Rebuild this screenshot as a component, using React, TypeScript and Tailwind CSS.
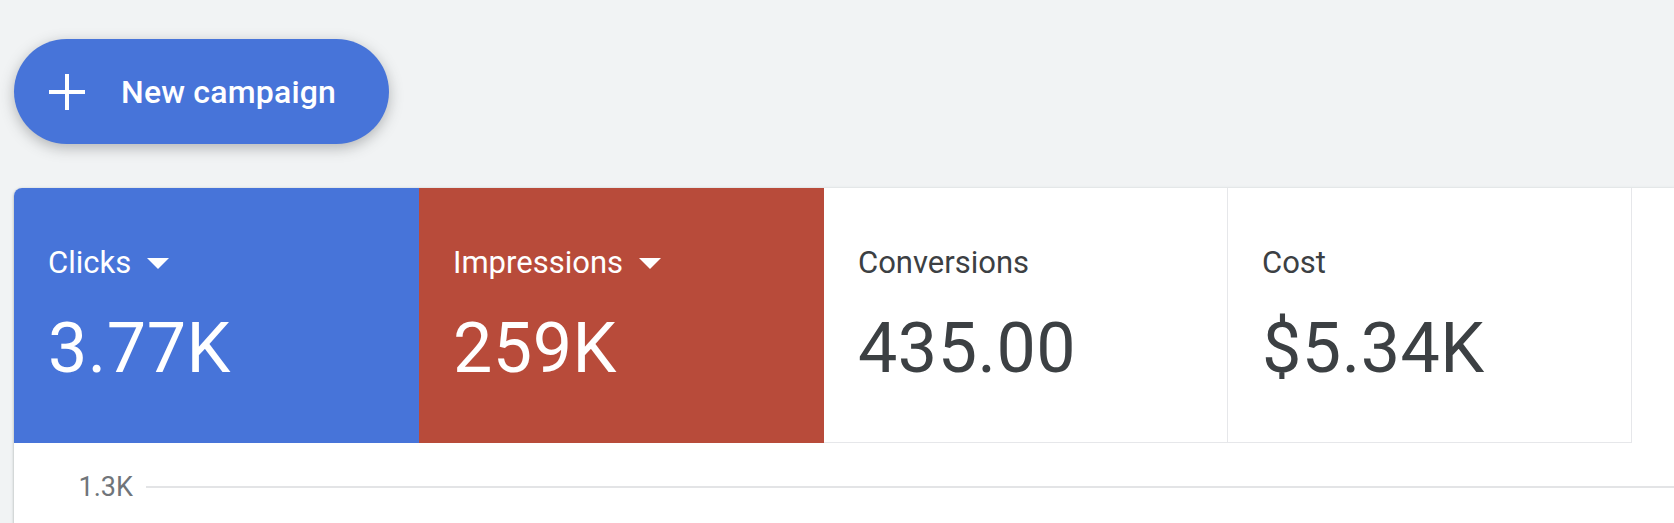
import React from 'react';

type Metric = {
  label: string;
  value: string;
  tone: 'blue' | 'red' | 'plain';
  dropdown?: boolean;
};

const metrics: Metric[] = [
  { label: 'Clicks', value: '3.77K', tone: 'blue', dropdown: true },
  { label: 'Impressions', value: '259K', tone: 'red', dropdown: true },
  { label: 'Conversions', value: '435.00', tone: 'plain' },
  { label: 'Cost', value: '$5.34K', tone: 'plain' },
];

const toneClass: Record<Metric['tone'], string> = {
  blue: 'w-[405px] bg-[#4774d9] text-white',
  red: 'w-[405px] bg-[#b84b3a] text-white',
  plain: 'w-[404px] bg-white text-[#3c4043] border-r border-b border-[#e6e7ea]',
};

const Caret = () => (
  <svg width="22" height="11" viewBox="0 0 22 11" className="ml-[16px] shrink-0">
    <path d="M0 0 L22 0 L11 11 Z" fill="currentColor" />
  </svg>
);

const MetricTile: React.FC<{ metric: Metric }> = ({ metric }) => (
  <div className={`h-[255px] shrink-0 px-[34px] pt-[57px] ${toneClass[metric.tone]}`}>
    <div className="flex items-center h-[36px] text-[31px] leading-[36px]">
      <span>{metric.label}</span>
      {metric.dropdown && <Caret />}
    </div>
    <div className="mt-[27px] text-[70px] leading-[80px] tracking-[0.5px]">{metric.value}</div>
  </div>
);

export default function App() {
  return (
    <div
      className="h-screen w-full overflow-hidden bg-[#f1f3f4] pl-[14px] pt-[39px]"
      style={{ fontFamily: 'Roboto, "Liberation Sans", sans-serif' }}
    >
      {/* New campaign button */}
      <button className="flex items-center h-[105px] w-[375px] rounded-full bg-[#4774d9] pl-[35px] text-white shadow-[0_4px_14px_rgba(60,64,67,0.35)]">
        <svg width="36" height="36" viewBox="0 0 36 36" className="shrink-0">
          <path d="M18 0 V36 M0 18 H36" stroke="currentColor" strokeWidth="4" />
        </svg>
        <span className="ml-[36px] text-[32px] leading-[40px] font-medium tracking-[0.2px]">New campaign</span>
      </button>

      {/* Performance card */}
      <div className="mt-[44px] rounded-tl-lg overflow-hidden bg-white shadow-[0_1px_2px_rgba(60,64,67,0.3),0_1px_3px_1px_rgba(60,64,67,0.12)]">
        <div className="flex">
          {metrics.map((m) => (
            <MetricTile key={m.label} metric={m} />
          ))}
        </div>

        {/* Chart top gridline */}
        <div className="flex items-center pt-[28px] pb-[40px]">
          <span className="w-[132px] pr-[13px] text-right text-[27px] leading-[32px] text-[#70757a]">1.3K</span>
          <div className="h-[2px] flex-1 bg-[#e3e4e6]" />
        </div>
      </div>
    </div>
  );
}
